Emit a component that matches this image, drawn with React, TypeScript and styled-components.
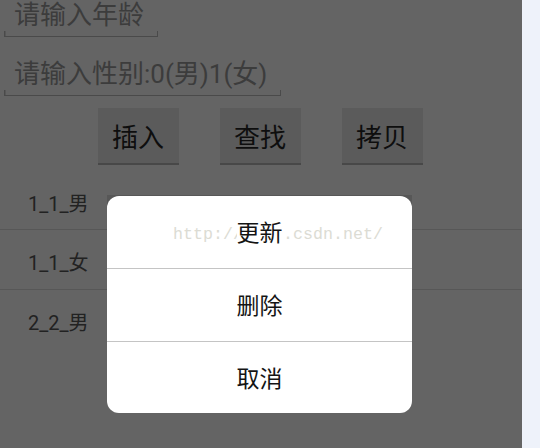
import React from "react";
import styled, { createGlobalStyle } from "styled-components";

const Global = createGlobalStyle`
  html, body { margin: 0; padding: 0; }
  body {
    width: 540px;
    height: 448px;
    overflow: hidden;
    background: #eef2fa;
    font-family: Roboto, "Noto Sans CJK SC", sans-serif;
  }
`;

const Frame = styled.div`
  display: flex;
  width: 540px;
  height: 448px;
`;

const Screen = styled.div`
  position: relative;
  width: 522px;
  height: 448px;
  background: #646464;
  overflow: hidden;
  display: flex;
  flex-direction: column;
`;

const Side = styled.div`
  flex: 1;
  background: #eef2fa;
`;

const Field = styled.div<{ $w: number; $mt: number }>`
  box-sizing: border-box;
  width: ${(p) => p.$w}px;
  margin: ${(p) => p.$mt}px 0 0 4px;
  padding: 0 0 6px 10px;
  font-size: 26px;
  line-height: 30px;
  color: #3c3c3c;
  white-space: nowrap;
  border-bottom: 1.5px solid #4a4a4a;
  background:
    linear-gradient(#4a4a4a, #4a4a4a) left bottom / 1.5px 5px no-repeat,
    linear-gradient(#4a4a4a, #4a4a4a) right bottom / 1.5px 5px no-repeat;
`;

const ButtonRow = styled.div`
  display: flex;
  justify-content: center;
  gap: 41px;
  margin: 12px 0 0 -2px;
`;

const Button = styled.div`
  box-sizing: border-box;
  width: 81px;
  height: 57px;
  display: flex;
  align-items: center;
  justify-content: center;
  background: #5b5b5b;
  border-bottom: 2px solid #484848;
  color: #0e0e0e;
  font-size: 26px;
`;

const List = styled.div`
  margin-top: 8px;
  display: flex;
  flex-direction: column;
`;

const Row = styled.div<{ $h: number; $line?: boolean }>`
  box-sizing: border-box;
  height: ${(p) => p.$h}px;
  display: flex;
  align-items: center;
  padding: 3px 0 0 28px;
  font-size: 20px;
  color: #222;
  border-bottom: ${(p) => (p.$line ? "1px solid #575757" : "none")};
`;

const DialogWrap = styled.div`
  position: absolute;
  left: 107px;
  top: 195px;
  width: 305px;
  padding-top: 1px;
  background: linear-gradient(#575757, #575757) top / 100% 14px no-repeat;
`;

const Card = styled.div`
  position: relative;
  height: 217px;
  background: #fff;
  border-radius: 12px;
  display: flex;
  flex-direction: column;
  overflow: hidden;
`;

const Item = styled.div<{ $h: number; $line?: boolean }>`
  box-sizing: border-box;
  height: ${(p) => p.$h}px;
  display: flex;
  align-items: center;
  justify-content: center;
  padding-top: 4px;
  font-size: 23px;
  color: #141414;
  border-bottom: ${(p) => (p.$line ? "1px solid #c4c4c4" : "none")};
`;

const Label = styled.span`
  position: relative;
  z-index: 1;
  background: #fff;
  line-height: 28px;
`;

const Watermark = styled.div`
  position: absolute;
  left: 66px;
  top: 29px;
  font-family: "Liberation Mono", monospace;
  font-size: 16.67px;
  line-height: 20px;
  color: #dcdcd4;
  white-space: nowrap;
`;

export default function App() {
  return (
    <>
      <Global />
      <Frame>
        <Screen>
          <Field $w={154} $mt={0}>请输入年龄</Field>
          <Field $w={277} $mt={22}>请输入性别:0(男)1(女)</Field>
          <ButtonRow>
            <Button>插入</Button>
            <Button>查找</Button>
            <Button>拷贝</Button>
          </ButtonRow>
          <List>
            <Row $h={57} $line>1_1_男</Row>
            <Row $h={60} $line>1_1_女</Row>
            <Row $h={60}>2_2_男</Row>
          </List>
          <DialogWrap>
            <Card>
              <Watermark>http://blog.csdn.net/</Watermark>
              <Item $h={73} $line>
                <Label>更新</Label>
              </Item>
              <Item $h={73} $line>
                <Label>删除</Label>
              </Item>
              <Item $h={71}>
                <Label>取消</Label>
              </Item>
            </Card>
          </DialogWrap>
        </Screen>
        <Side />
      </Frame>
    </>
  );
}
